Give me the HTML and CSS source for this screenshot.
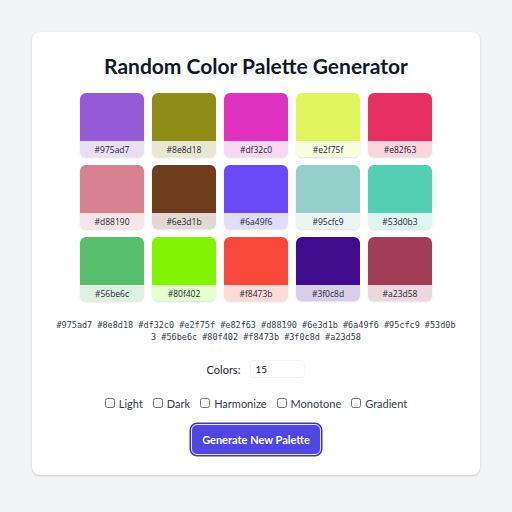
FILE: index.html
```html
<!DOCTYPE html>
<html lang="en">
<head>
<meta charset="utf-8">
<title>Random Color Palette Generator</title>
<link rel="stylesheet" href="styles.css">
</head>
<body>
<main class="card">
  <h1 class="title">Random Color Palette Generator</h1>
  <div class="grid">
    <div class="swatch"><div class="chip" style="background:#975ad7"></div><div class="label" style="background:#975ad733">#975ad7</div></div>
    <div class="swatch"><div class="chip" style="background:#8e8d18"></div><div class="label" style="background:#8e8d1833">#8e8d18</div></div>
    <div class="swatch"><div class="chip" style="background:#df32c0"></div><div class="label" style="background:#df32c033">#df32c0</div></div>
    <div class="swatch"><div class="chip" style="background:#e2f75f"></div><div class="label" style="background:#e2f75f33">#e2f75f</div></div>
    <div class="swatch"><div class="chip" style="background:#e82f63"></div><div class="label" style="background:#e82f6333">#e82f63</div></div>
    <div class="swatch"><div class="chip" style="background:#d88190"></div><div class="label" style="background:#d8819033">#d88190</div></div>
    <div class="swatch"><div class="chip" style="background:#6e3d1b"></div><div class="label" style="background:#6e3d1b33">#6e3d1b</div></div>
    <div class="swatch"><div class="chip" style="background:#6a49f6"></div><div class="label" style="background:#6a49f633">#6a49f6</div></div>
    <div class="swatch"><div class="chip" style="background:#95cfc9"></div><div class="label" style="background:#95cfc933">#95cfc9</div></div>
    <div class="swatch"><div class="chip" style="background:#53d0b3"></div><div class="label" style="background:#53d0b333">#53d0b3</div></div>
    <div class="swatch"><div class="chip" style="background:#56be6c"></div><div class="label" style="background:#56be6c33">#56be6c</div></div>
    <div class="swatch"><div class="chip" style="background:#80f402"></div><div class="label" style="background:#80f40233">#80f402</div></div>
    <div class="swatch"><div class="chip" style="background:#f8473b"></div><div class="label" style="background:#f8473b33">#f8473b</div></div>
    <div class="swatch"><div class="chip" style="background:#3f0c8d"></div><div class="label" style="background:#3f0c8d33">#3f0c8d</div></div>
    <div class="swatch"><div class="chip" style="background:#a23d58"></div><div class="label" style="background:#a23d5833">#a23d58</div></div>
  </div>
  <p class="hexlist">#975ad7 #8e8d18 #df32c0 #e2f75f #e82f63 #d88190 #6e3d1b #6a49f6 #95cfc9 #53d0b3 #56be6c #80f402 #f8473b #3f0c8d #a23d58</p>
  <div class="count">
    <label class="count-label" for="count">Colors:</label>
    <input class="count-input" id="count" type="number" value="15">
  </div>
  <div class="options">
    <label class="option"><input type="checkbox" class="box"> Light</label>
    <label class="option"><input type="checkbox" class="box"> Dark</label>
    <label class="option"><input type="checkbox" class="box"> Harmonize</label>
    <label class="option"><input type="checkbox" class="box"> Monotone</label>
    <label class="option"><input type="checkbox" class="box"> Gradient</label>
  </div>
  <div class="actions">
    <button class="btn" type="button">Generate New Palette</button>
  </div>
</main>
</body>
</html>
```
FILE: styles.css
```css
* { box-sizing: border-box; }
html, body { margin: 0; }
body {
  background: #f3f4f6;
  padding: 32px;
  font-family: "Lato", "Open Sans", sans-serif;
  color: #111827;
}
.card {
  background: #fff;
  border-radius: 8px;
  box-shadow: 0 1px 3px rgba(0,0,0,0.12), 0 1px 2px rgba(0,0,0,0.06);
  padding: 20px 24px 18px;
  width: 448px;
  height: 443px;
}
.title {
  margin: 0 0 13px;
  text-align: center;
  font-size: 21px;
  line-height: 28px;
  font-weight: 700;
  color: #111827;
}
.grid {
  display: grid;
  grid-template-columns: repeat(5, 64px);
  gap: 8px;
  justify-content: center;
}
.swatch {
  border-radius: 6px;
  overflow: hidden;
  box-shadow: 0 1px 2px rgba(0,0,0,0.12);
  display: flex;
  flex-direction: column;
}
.chip { height: 48px; }
.label {
  height: 16px;
  display: flex;
  align-items: center;
  justify-content: center;
  font-family: "Open Sans", sans-serif;
  font-size: 8.5px;
  color: #1f2937;
}
.hexlist {
  margin: 18px 0 0;
  font-family: "DejaVu Sans Mono", "Liberation Mono", monospace;
  font-size: 8.5px;
  line-height: 12px;
  color: #374151;
  text-align: center;
  word-break: break-all;
}
.count {
  margin-top: 17px;
  display: flex;
  justify-content: center;
  align-items: center;
  gap: 10px;
  font-size: 11px;
  color: #1f2937;
}
.count-input {
  width: 55px;
  height: 18px;
  border: 1px solid #f3f4f6;
  border-radius: 4px;
  padding: 0 4px;
  font: inherit;
  font-size: 10px;
  color: #111827;
  -moz-appearance: textfield;
}
.count-input::-webkit-inner-spin-button,
.count-input::-webkit-outer-spin-button { -webkit-appearance: none; margin: 0; }
.options {
  margin-top: 17px;
  display: flex;
  justify-content: center;
  gap: 10px;
  font-size: 11px;
  color: #374151;
  height: 16px;
  align-items: center;
}
.option {
  display: flex;
  align-items: center;
  gap: 4px;
}
.box {
  margin: 0;
  width: 10px;
  height: 10px;
}
.actions {
  margin-top: 13px;
  display: flex;
  justify-content: center;
}
.btn {
  width: 130px;
  height: 31px;
  background: #4f46e5;
  color: #fff;
  border: 1px solid #e0e7ff;
  border-radius: 6px;
  box-shadow: 0 0 0 1.5px #4338ca;
  font-family: inherit;
  font-weight: 700;
  font-size: 11px;
}
```
